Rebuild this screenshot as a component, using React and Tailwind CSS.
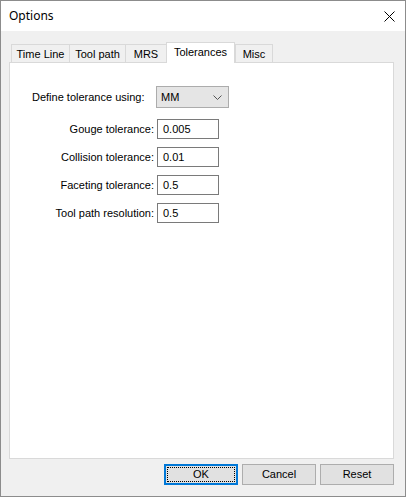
import React from "react";

const font = { fontFamily: '"Liberation Sans", Arial, sans-serif' };

function Tab({ label, w, active, last }) {
  if (active) {
    return (
      <div
        className="relative z-10 -mb-px h-[21px] bg-white border border-b-0 border-[#d9d9d9] flex justify-center pt-[2px] text-[11px] text-black leading-[14px]"
        style={{ width: w }}
      >
        {label}
      </div>
    );
  }
  return (
    <div
      className={
        "h-[18px] bg-[#f0f0f0] border-t border-l border-[#d9d9d9] flex justify-center pt-[2px] text-[11px] text-black leading-[14px] " +
        (last ? "border-r" : "")
      }
      style={{ width: w }}
    >
      {label}
    </div>
  );
}

function Row({ label, value }) {
  return (
    <div className="flex items-center">
      <div className="w-[144px] text-right text-[11px] text-black leading-[14px]">{label}</div>
      <div className="ml-[3px] w-[62px] h-[20px] border border-[#7a7a7a] bg-white flex items-center pl-[5px] text-[11px] text-black">
        {value}
      </div>
    </div>
  );
}

function Button({ children, focused }) {
  return (
    <div
      className={
        "relative w-[74px] h-[21px] bg-[#e1e1e1] flex items-center justify-center text-[11px] text-black " +
        (focused ? "border-2 border-[#0078d7]" : "border border-[#adadad]")
      }
    >
      {focused && (
        <span className="absolute inset-[1px] border border-dotted border-black" />
      )}
      <span className="relative">{children}</span>
    </div>
  );
}

export default function App() {
  return (
    <div
      className="w-[406px] h-[497px] border border-[#8c8c8c] bg-[#f0f0f0] flex flex-col"
      style={font}
    >
      <div className="h-[30px] bg-white flex items-center justify-between pl-[8px] pr-[10px]">
        <span
          className="text-[12px] text-black"
          style={{ fontFamily: '"Noto Sans", "Open Sans", sans-serif' }}
        >
          Options
        </span>
        <svg width="11" height="11" viewBox="0 0 11 11" className="mr-[0px]">
          <path d="M0.5 0.5 L10.5 10.5 M10.5 0.5 L0.5 10.5" stroke="#000" strokeWidth="1" fill="none" />
        </svg>
      </div>

      <div className="flex flex-col pl-[8px] pr-[11px] pt-[11px] pb-[11px] flex-1">
        <div className="flex items-end h-[20px] pl-[2px]">
          <Tab label="Time Line" w={58} />
          <Tab label="Tool path" w={56} />
          <Tab label="MRS" w={41} />
          <Tab label="Tolerances" w={69} active />
          <Tab label="Misc" w={38} last />
        </div>

        <div className="h-[397px] border border-[#d9d9d9] bg-white pt-[23px]">
          <div className="flex items-center pl-[22px]">
            <div className="w-[124px] text-[11px] text-black leading-[14px]">Define tolerance using:</div>
            <div className="w-[73px] h-[22px] bg-[#e5e5e5] border border-[#acacac] flex items-center justify-between pl-[4px] pr-[6px] text-[11px] text-black">
              <span>MM</span>
              <svg width="9" height="5" viewBox="0 0 9 5">
                <path d="M0.5 0.5 L4.5 4.5 L8.5 0.5" stroke="#555" strokeWidth="1" fill="none" />
              </svg>
            </div>
          </div>

          <div className="flex flex-col gap-[8px] mt-[11px]">
            <Row label="Gouge tolerance:" value="0.005" />
            <Row label="Collision tolerance:" value="0.01" />
            <Row label="Faceting tolerance:" value="0.5" />
            <Row label="Tool path resolution:" value="0.5" />
          </div>
        </div>

        <div className="flex justify-end gap-[4px] mt-[5px]">
          <Button focused>OK</Button>
          <Button>Cancel</Button>
          <Button>Reset</Button>
        </div>
      </div>
    </div>
  );
}
